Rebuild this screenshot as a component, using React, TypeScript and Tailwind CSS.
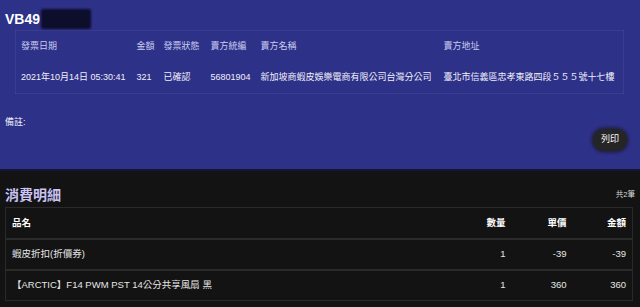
const font = { fontFamily: '"Liberation Sans", "Noto Sans CJK TC", sans-serif' }

const invoiceCols = [
  { label: '發票日期', value: '2021年10月14日 05:30:41', w: 'w-[116px]' },
  { label: '金額', value: '321', w: 'w-[27px]' },
  { label: '發票狀態', value: '已確認', w: 'w-[47px]' },
  { label: '賣方統編', value: '56801904', w: 'w-[50px]' },
  { label: '賣方名稱', value: '新加坡商蝦皮娛樂電商有限公司台灣分公司', w: 'w-[183px]' },
  { label: '賣方地址', value: '臺北市信義區忠孝東路四段５５５號十七樓', w: 'w-[185px]' },
]

const items = [
  { name: '蝦皮折扣(折價券)', qty: '1', price: '-39', total: '-39' },
  { name: '【ARCTIC】F14 PWM PST 14公分共享風扇 黑', qty: '1', price: '360', total: '360' },
]

export default function App() {
  return (
    <div className="w-[640px] h-[307px] overflow-hidden bg-[#131313] text-white" style={font}>
      {/* invoice header */}
      <section className="bg-[#2e3188] h-[169px] px-[5px] pt-[8px]">
        <div className="flex items-center h-[22px]">
          <h1 className="text-[14px] font-bold leading-none">VB49</h1>
          <div className="ml-[1px] w-[50px] h-[20px] bg-[#0d0d2c] rounded-[2px] blur-[1px]" />
        </div>

        <table className="ml-[10px] w-[608px] table-fixed border border-white/[0.06] text-[9px]">
          <thead>
            <tr className="h-[32px]">
              {invoiceCols.map((c) => (
                <th key={c.label} className={`${c.w} pl-[5px] text-left font-normal text-[#c9cbf0]`}>
                  {c.label}
                </th>
              ))}
            </tr>
          </thead>
          <tbody>
            <tr className="h-[31px]">
              {invoiceCols.map((c) => (
                <td key={c.label} className="pl-[5px] whitespace-nowrap text-[#f0f0fa]">
                  {c.value}
                </td>
              ))}
            </tr>
          </tbody>
        </table>

        <p className="mt-[22px] text-[9px] leading-[12px] text-[#eeeef8]">備註:</p>
        <div className="flex justify-end pr-[8px] mt-[1px]">
          <button className="h-[22px] px-[8px] rounded-full bg-[#252525] text-[9px] text-white shadow-[0_0_3px_2px_rgba(20,20,20,0.5)]">
            列印
          </button>
        </div>
      </section>

      {/* item list */}
      <section className="border-t-2 border-[#141634] px-[5px]">
        <div className="flex items-end justify-between h-[36px] pb-[5px]">
          <h2 className="text-[14px] font-bold leading-none text-[#c8c3f3]">消費明細</h2>
          <span className="text-[7.5px] leading-none text-[#d8d8d8] mb-[4px]">共2筆</span>
        </div>
        <table className="w-[628px] table-fixed border border-[#2a2a2a] text-[9.5px]">
          <thead>
            <tr className="h-[31px] border-b-2 border-[#2a2a2a]">
              <th className="pl-[6px] text-left font-bold">品名</th>
              <th className="w-[80px] pr-[6px] text-right font-bold">數量</th>
              <th className="w-[61px] pr-[6px] text-right font-bold">單價</th>
              <th className="w-[60px] pr-[6px] text-right font-bold">金額</th>
            </tr>
          </thead>
          <tbody>
            {items.map((it, i) => (
              <tr key={i} className={`h-[31px] ${i < items.length - 1 ? 'border-b-2 border-[#2a2a2a]' : ''}`}>
                <td className="pl-[6px] text-[#e6e6e6] whitespace-nowrap">{it.name}</td>
                <td className="pr-[6px] text-right text-[#e6e6e6]">{it.qty}</td>
                <td className="pr-[6px] text-right text-[#e6e6e6]">{it.price}</td>
                <td className="pr-[6px] text-right text-[#e6e6e6]">{it.total}</td>
              </tr>
            ))}
          </tbody>
        </table>
      </section>
    </div>
  )
}
